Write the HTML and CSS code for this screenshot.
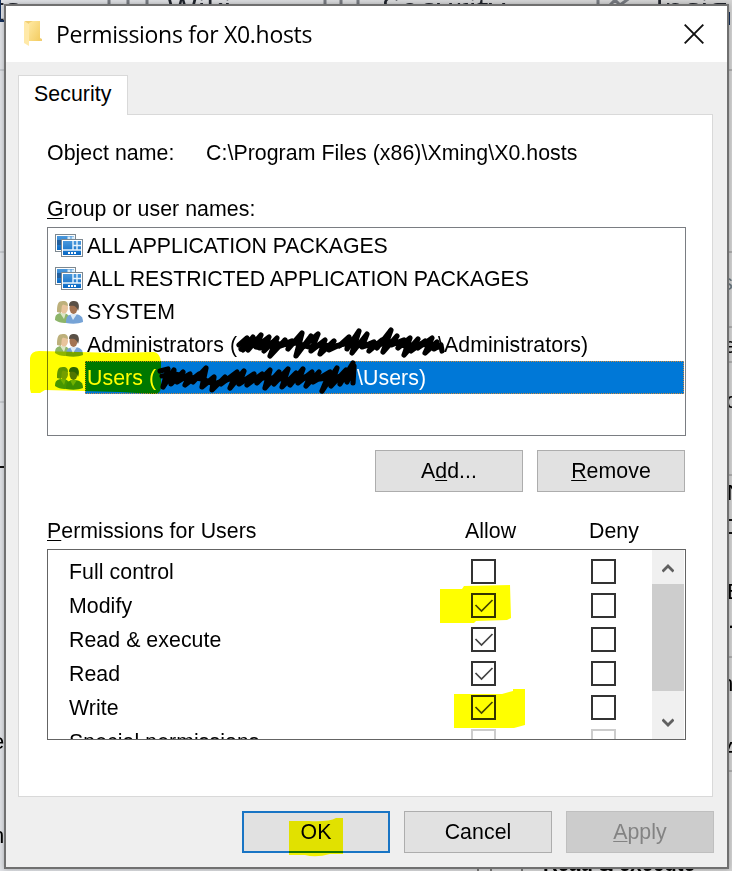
FILE: index.html
```html
<!DOCTYPE html>
<html lang="en">
<head>
<meta charset="utf-8">
<title>Permissions for X0.hosts</title>
<link rel="stylesheet" href="styles.css">
</head>
<body>
<svg class="backdrop" width="732" height="871" viewBox="0 0 732 871" aria-hidden="true">
  <g class="nav-text">
    <text x="-26" y="21">ets</text><text x="167" y="21">Wiki</text><text x="382" y="21">Security</text><text x="655" y="21">Insig</text>
  </g>
  <path d="M0 0v21h4M729 12v13" stroke="#16315c" stroke-width="2" fill="none"/>
  <g stroke="#777a80" stroke-width="3" fill="none"><path d="M109 0v5M128 0v5M147 0v5M325 0v5M341 0v5M358 0v5M598 0v5M610 5l5-5 5 5 11-8"/></g>
  <path d="M0 70h4M0 402h4M0 252h4" stroke="#aeb2b8"/>
  <path d="M729 70h3M729 252h3M729 327h3M729 362h3M729 475h3M729 657h3M729 771h3" stroke="#888"/>
  <path d="M0 467h4M729 520h3M729 533h3" stroke="#111" stroke-width="2"/>
  <g class="side-text"><text x="-8" y="749">e</text><text x="-8" y="843">n</text>
    <text x="722" y="290" fill="#6b7880">s</text><text x="724" y="353">e</text><text x="726" y="408">o</text><text x="727" y="500">N</text><text x="727" y="599">B</text><text x="728" y="628">.</text><text x="721" y="691">n</text><text x="724" y="757">A</text>
    <text x="543" y="871" font-weight="bold" textLength="152" lengthAdjust="spacingAndGlyphs">Read &amp; execute</text></g>
  <path d="M478 869v2M491 869v2M522 869v2" stroke="#777" stroke-width="2"/>
</svg>

<svg class="symbols" aria-hidden="true">
  <defs>
    <linearGradient id="tile" x1="0" y1="0" x2="0" y2="1"><stop offset="0" stop-color="#4a98dc"/><stop offset="1" stop-color="#0868c4"/></linearGradient>
    <linearGradient id="fold" x1="0" y1="0" x2="1" y2="1"><stop offset="0" stop-color="#ffe9a2"/><stop offset="1" stop-color="#f3cc61"/></linearGradient>
    <symbol id="packages" viewBox="0 0 28 23">
      <rect x=".5" y=".5" width="20" height="17" fill="#fff" stroke="#7d8890"/>
      <rect x="2" y="2" width="17" height="14" fill="url(#tile)"/>
      <path d="M12.500 2.500h3v3h-3zM16.500 2.500h3v3h-3z" fill="#d5eafa"/><path d="M2 6h5v5H2z" fill="#235f9d"/>
      <rect x="6.500" y="5.500" width="21" height="17" fill="#fff" stroke="#7d8890"/>
      <rect x="8" y="7" width="18" height="14" fill="url(#tile)"/>
      <path d="M18 7v9M8 16h18M22 7v9M18 11.500h8" stroke="#e8f4fc" stroke-width="1.400"/>
      <path d="M13 18h2v2h-2zM16 18h2v2h-2zM19 18h2v2h-2z" fill="#fff"/>
    </symbol>
    <symbol id="people" viewBox="0 0 28 24">
      <path d="M0 20c0-5 2-7 7-7s8 2 9 9c-6 2-12 1-16-2z" fill="#8db56a"/>
      <path d="M5 13l4 6 2-6z" fill="#dbe6c7"/>
      <ellipse cx="9" cy="8" rx="4" ry="5.500" fill="#e8c49c"/>
      <path d="M2 12C2 4 3 1 8 1c4 0 5 2 5 5L8 4.500C6 6 7 9 6 13z" fill="#bdb07b"/>
      <path d="M11 23c0-6 1-8 7-9 8 0 10 3 10 8-5 2-11 2-17 1z" fill="#76a3d6"/>
      <path d="M15 14l3 6 4-6z" fill="#dce9f5"/>
      <ellipse cx="18.500" cy="8" rx="4" ry="6" fill="#a37352"/>
      <path d="M14 6c0-4 2-5 5-5 5 0 6 5 4 10-1-4-3-6-9-5z" fill="#595047"/>
    </symbol>
    <filter id="tint" color-interpolation-filters="sRGB"><feColorMatrix values=".5 0 0 0 0  0 .5 0 0 .235  0 0 .5 0 .42  0 0 0 1 0"/></filter>
  </defs>
</svg>

<main class="window">
  <header class="titlebar">
    <svg class="folder" width="18" height="27" viewBox="0 0 18 27"><path d="M1 1l15 0v17l2 1v2H5z" fill="#f1ce72"/><path d="M0 1l5 3v22l-5-3z" fill="#ffe9a8"/><path d="M5 3l4-2h7v20H5z" fill="url(#fold)"/></svg>
    <h1>Permissions for X0.hosts</h1>
    <svg class="close" width="20" height="20" viewBox="0 0 20 20"><path d="M.7.700l18.600 18.600M19.300.700L.7 19.300" stroke="#111" stroke-width="1.900"/></svg>
  </header>
  <div class="tab">Security</div>
  <section class="panel">
    <div class="object"><span>Object name:</span><span>C:\Program Files (x86)\Xming\X0.hosts</span></div>
    <div class="group-label"><u>G</u>roup or user names:</div>
    <ul class="names">
      <li class="caps"><svg class="pk"><use href="#packages"/></svg><span>ALL APPLICATION PACKAGES</span></li>
      <li class="caps"><svg class="pk"><use href="#packages"/></svg><span>ALL RESTRICTED APPLICATION PACKAGES</span></li>
      <li><svg class="pp"><use href="#people"/></svg><span>SYSTEM</span></li>
      <li><svg class="pp"><use href="#people"/></svg><span>Administrators (<i class="gap-admin"></i>\Administrators)</span></li>
      <li class="selected"><svg class="pp"><g filter="url(#tint)"><use href="#people"/></g></svg><span>Users (<i class="gap-users"></i>\Users)</span></li>
    </ul>
    <div class="actions"><button>A<u>d</u>d...</button><button><u>R</u>emove</button></div>
    <div class="perm-head"><span><u>P</u>ermissions for Users</span><span>Allow</span><span>Deny</span></div>
    <div class="perms">
      <div class="rows">
        <div class="row"><span>Full control</span><b></b><b></b></div>
        <div class="row"><span>Modify</span><b><svg viewBox="0 0 21 21"><path d="M2.500 10l6 6L19.500 5"/></svg></b><b></b></div>
        <div class="row"><span>Read &amp; execute</span><b><svg viewBox="0 0 21 21"><path d="M2.500 10l6 6L19.500 5"/></svg></b><b></b></div>
        <div class="row"><span>Read</span><b><svg viewBox="0 0 21 21"><path d="M2.500 10l6 6L19.500 5"/></svg></b><b></b></div>
        <div class="row"><span>Write</span><b><svg viewBox="0 0 21 21"><path d="M2.500 10l6 6L19.500 5"/></svg></b><b></b></div>
        <div class="row off"><span>Special permissions</span><b></b><b></b></div>
      </div>
      <div class="scroll">
        <svg width="12" height="9" viewBox="0 0 12 9"><path d="M.5 7.500L6 2l5.500 5.500"/></svg>
        <div class="thumb"></div>
        <svg width="12" height="9" viewBox="0 0 12 9"><path d="M.5 1.500L6 7l5.500-5.500"/></svg>
      </div>
    </div>
  </section>
  <footer><button class="ok">OK</button><button>Cancel</button><button class="disabled"><u>A</u>pply</button></footer>
</main>

<svg class="marks" width="732" height="871" viewBox="0 0 732 871" aria-hidden="true">
  <g fill="#ff0">
    <path d="M30 389V358q1-7 9-7l78 2 37-1q6 1 7 10v24q0 8-7 8l-34-2-75-2-5 3H31z"/>
    <path d="M440 589h22l2-3 46-1 1 33-4 2-31 1-2 2h-34z"/>
    <path d="M454 694h48l11-3v-2h12v36l-11 3h-60z"/>
    <path d="M289 821h20q20 1 27-3h7v36h-13q-14 4-25 1h-16z"/>
  </g>
  <g class="ink">
    <path d="M239 345L247 338 243 350 253 337 248 350 261 335 256 347 269 337 264 351 277 338 270 356 285 340 280 346 292 341 288 349 302 333 296 356 311 336 303 347 318 334 311 351 325 340 320 354 334 341 329 350 344 343 339 346 349 337 347 349 359 331 352 353 367 334 362 347 374 342 369 351 382 340 377 348 391 330 383 352 397 336 391 345 404 340 398 348 410 338 404 355 418 339 411 351 425 341 418 348 432 338 425 353 437 342 434 349 441 345 442 351"/>
    <path d="M241 349L251 344 260 348 273 342 282 345 296 343 309 347 322 345 335 346 349 343 363 346 377 345 391 342 405 346 420 344 439 347"/>
    <path d="M160 371L168 369 163 387 174 370 171 384 183 372 177 382 190 374 185 385 199 374 193 382 206 368 202 387 214 377 212 390 225 377 221 384 237 372 230 388 244 371 239 384 254 374 247 385 262 374 257 383 270 370 265 388 279 372 274 384 288 369 282 387 296 373 290 385 303 369 298 383 312 372 306 386 319 372 313 382 330 372 322 391 337 368 331 386 346 370 340 384 353 363 347 382 354 366 353 383"/>
    <path d="M162 376L175 374 188 377 202 379 214 384 229 379 244 380 258 378 274 378 289 380 305 377 320 379 337 377 352 374"/>
  </g>
</svg>
</body>
</html>
```
FILE: styles.css
```css
* { box-sizing: border-box; }
body { margin: 0; width: 732px; height: 871px; overflow: hidden; position: relative; background: linear-gradient(90deg, #dfe1e5, #d3d3d3); font: 21.3px/26px "Liberation Sans", Arial, sans-serif; letter-spacing: .06px; color: #000; }
.backdrop, .marks { position: absolute; left: 0; top: 0; display: block; }
.backdrop { z-index: -1; }
.symbols { position: absolute; width: 0; height: 0; }
.nav-text { font: 33px "Open Sans", sans-serif; fill: #20242c; }
.side-text { font-size: 22px; }
.marks { mix-blend-mode: multiply; pointer-events: none; }
.ink { fill: none; stroke: #000; stroke-width: 5.2; stroke-linecap: round; stroke-linejoin: round; }
.window { width: 725px; height: 865px; margin: 4px 0 0 4px; border: 2px solid #707070; background: #efefef; box-shadow: 0 0 5px #0004; display: flex; flex-direction: column; position: relative; }
.titlebar { height: 56px; flex: none; background: #fff; display: flex; align-items: center; padding: 0 23px 1px 18px; }
.folder { flex: none; }
h1 { font: 23px/30px "Open Sans", sans-serif; letter-spacing: -.3px; margin: 1px 0 0 14px; flex: 1; white-space: nowrap; }
.close { flex: none; }
.tab { width: 110px; height: 40px; margin: 13px 0 -1px 12px; flex: none; border: 1px solid #d9d9d9; border-bottom: 0; background: #fff; padding: 5px 0 0 15px; position: relative; z-index: 1; }
.panel { width: 695px; height: 683px; margin-left: 12px; flex: none; border: 1px solid #d9d9d9; background: #fff; padding: 25px 26px 0 28px; }
.object { display: flex; height: 26px; white-space: nowrap; }
.object span:first-child { width: 159px; }
.group-label { margin-top: 30px; }
u { text-decoration-thickness: 1px; text-underline-offset: 2px; }
.names { list-style: none; margin: 5px 0 0; padding: 1px; width: 639px; height: 209px; border: 1px solid #7a7d82; }
.names li { height: 33px; display: flex; align-items: center; padding-left: 6px; }
.names .caps { letter-spacing: -.08px; }
.names svg { width: 28px; height: 24px; flex: none; margin-right: 2px; }
.names .pk { height: 23px; }
.names span { flex: 1; height: 33px; line-height: 35px; padding-left: 2px; white-space: nowrap; }
.selected span { background: #0078d7; color: #fff; outline: 1px dotted #d18b3c; outline-offset: -1px; }
.gap-admin, .gap-users { display: inline-block; }
.gap-admin { width: 201px; }
.gap-users { width: 201px; }
button { font: inherit; letter-spacing: inherit; width: 148px; height: 42px; padding: 0; border: 1px solid #adadad; background: #e1e1e1; color: #000; border-radius: 0; }
.actions { display: flex; gap: 14px; margin-top: 14px; padding-left: 328px; }
.perm-head { display: grid; grid-template-columns: 418px 124px 1fr; margin-top: 26px; }
.perms { width: 639px; height: 191px; margin-top: 5px; border: 1px solid #646464; display: flex; overflow: hidden; padding-right: 1px; }
.rows { flex: 1; padding-top: 5px; }
.row { height: 34px; display: grid; grid-template-columns: 402px 120px 1fr; align-items: center; padding-left: 21px; }
.row b { width: 25px; height: 25px; margin-bottom: 1px; border: 2px solid #333; display: block; }
.row svg { display: block; width: 21px; height: 21px; fill: none; stroke: #444; stroke-width: 1.7; }
.off b { border-color: #ccc; }
.scroll { width: 32px; background: #f0f0f0; display: flex; flex-direction: column; align-items: center; }
.scroll svg { flex: none; fill: none; stroke: #606060; stroke-width: 2.8; margin: 14px 0 11px; }
.thumb { flex: none; width: 32px; height: 107px; background: #cdcdcd; }
.scroll svg:last-child { margin-top: 27px; }
footer { display: flex; gap: 14px; padding: 14px 0 0 236px; }
.ok { border: 2px solid #1874c4; }
.disabled { background: #ccc; border-color: #bfbfbf; color: #838383; }
```
